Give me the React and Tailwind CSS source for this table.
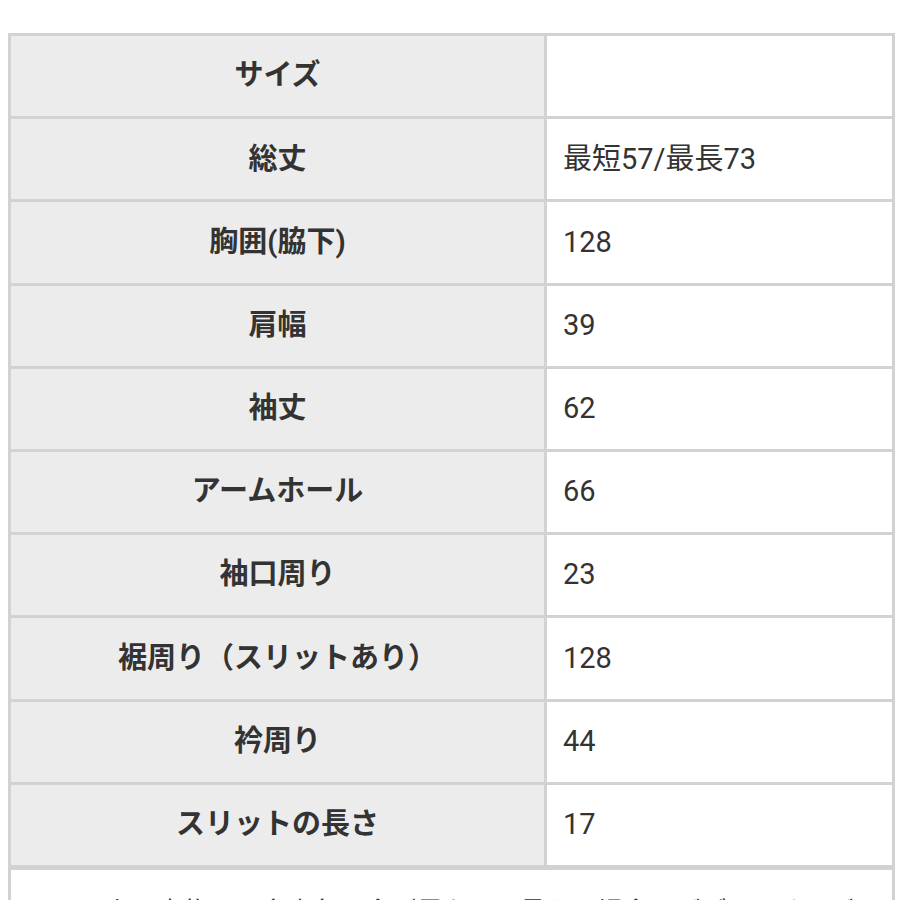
import React from "react";

const rows = [
  { label: "サイズ", value: "" },
  { label: "総丈", value: "最短57/最長73" },
  { label: "胸囲(脇下)", value: "128" },
  { label: "肩幅", value: "39" },
  { label: "袖丈", value: "62" },
  { label: "アームホール", value: "66" },
  { label: "袖口周り", value: "23" },
  { label: "裾周り（スリットあり）", value: "128" },
  { label: "衿周り", value: "44" },
  { label: "スリットの長さ", value: "17" },
];

const font = { fontFamily: '"Roboto", "Noto Sans CJK JP", sans-serif' };

export default function App() {
  return (
    <div className="min-h-[900px] bg-white pt-[33px] pl-[8px]" style={font}>
      <div className="w-[887px] bg-[#d2d2d2] p-[3px]">
        <div className="grid grid-cols-[533px_1fr] gap-[3px]">
          {rows.map((row) => (
            <React.Fragment key={row.label}>
              <div className="h-[80.2px] bg-[#ececec] flex items-center justify-center text-[29px] font-bold text-[#333]">
                {row.label}
              </div>
              <div className="h-[80.2px] bg-white flex items-center pl-[16px] text-[29px] text-[#333]">
                {row.value}
              </div>
            </React.Fragment>
          ))}
        </div>
        <div className="mt-[5px] bg-white px-[16px] pt-[22px] pb-[20px] text-[26px] text-[#333] leading-[1.6]">
          ※画面上と実物では多少色具合が異なって見える場合もございます。ご了承ください。
        </div>
      </div>
    </div>
  );
}
